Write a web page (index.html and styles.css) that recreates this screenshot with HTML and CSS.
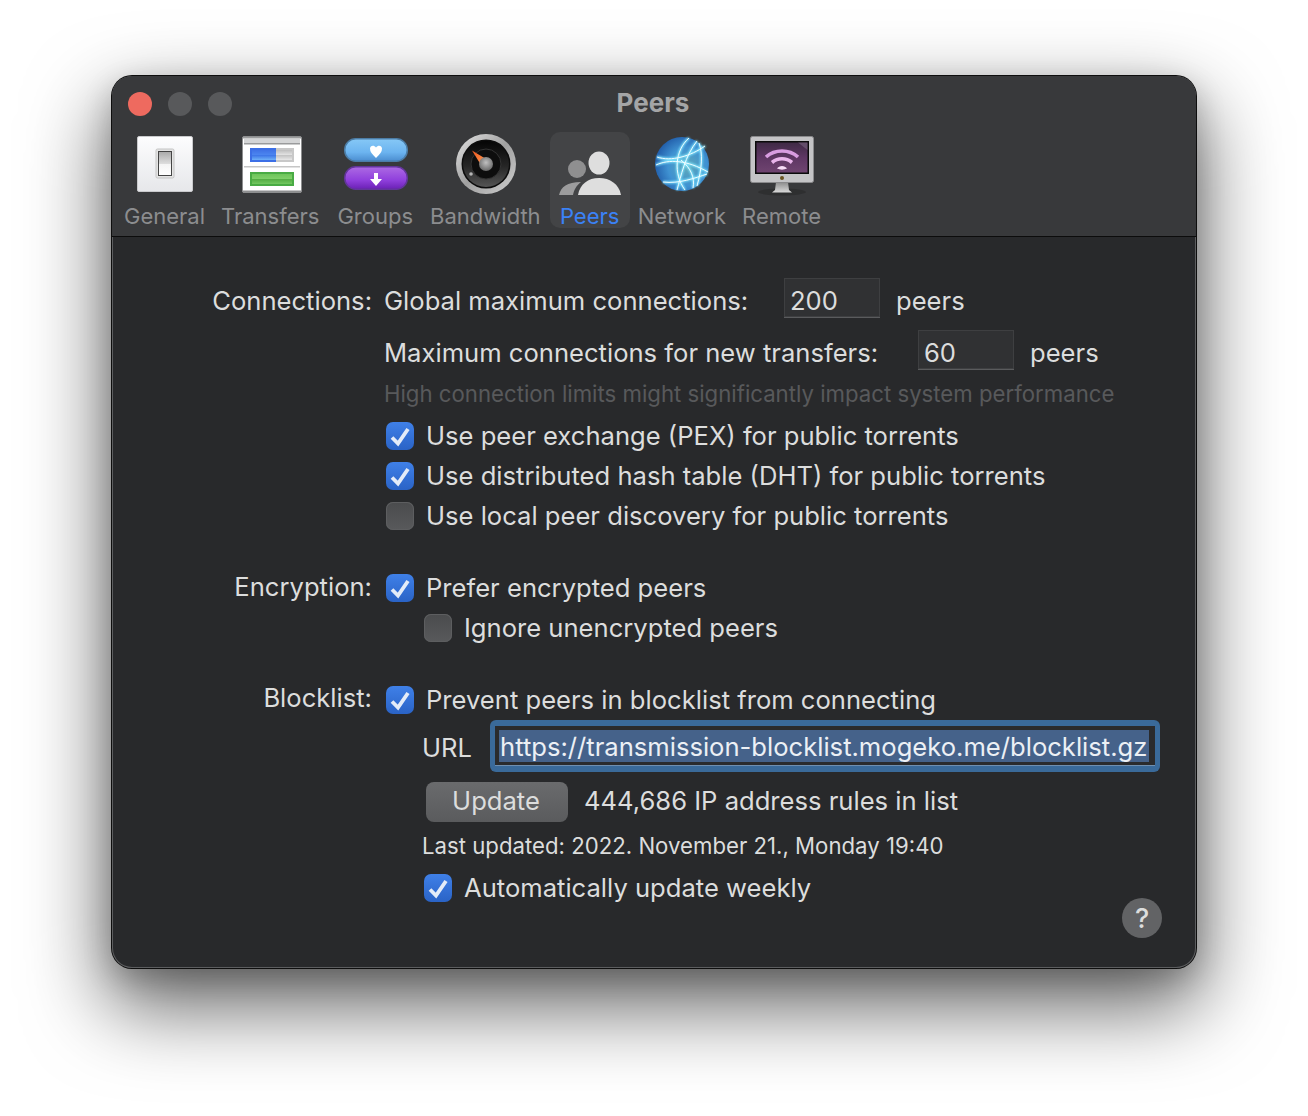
FILE: index.html
```html
<!DOCTYPE html>
<html lang="en">
<head>
    <meta charset="UTF-8">
    <meta name="viewport" content="width=device-width, initial-scale=1.0">
    <title>Peers</title>
    <link rel="stylesheet" href="styles.css">
</head>
<body>
    <div class="window">
        <div class="header">
            <div class="titlebar">
                <div class="lights">
                    <span class="light close"></span>
                    <span class="light"></span>
                    <span class="light"></span>
                </div>
                <div class="title">Peers</div>
            </div>
            <div class="toolbar">
                <div class="tool tool-general">
                    <svg class="tool-icon" width="56" height="64" viewBox="0 0 56 64">
                        <defs>
                            <linearGradient id="plate" x1="0" y1="0" x2="0" y2="1"><stop offset="0" stop-color="#fdfdfe"/><stop offset="1" stop-color="#e6e7ea"/></linearGradient>
                            <linearGradient id="rocker" x1="0" y1="0" x2="0" y2="1"><stop offset="0" stop-color="#a9a9a9"/><stop offset=".5" stop-color="#dcdcdc"/><stop offset=".52" stop-color="#f4f4f4"/><stop offset="1" stop-color="#fff"/></linearGradient>
                        </defs>
                        <rect x=".5" y="4.5" width="55" height="55" rx="1.5" fill="url(#plate)" stroke="#c9cacc"/>
                        <rect x="19" y="17" width="18" height="29" rx="1.5" fill="#e4e4e4" stroke="#c4c4c4"/>
                        <rect x="21.5" y="19.5" width="13" height="24" fill="url(#rocker)" stroke="#444" stroke-width="1"/>
                    </svg>
                    <span class="tool-label">General</span>
                </div>
                <div class="tool tool-transfers">
                    <svg class="tool-icon" width="60" height="64" viewBox="0 0 60 64">
                        <defs>
                            <linearGradient id="blue-bar" x1="0" y1="0" x2="0" y2="1"><stop offset="0" stop-color="#3f72e6"/><stop offset=".5" stop-color="#4c86f0"/><stop offset=".55" stop-color="#3f78e8"/><stop offset="1" stop-color="#6eb0f8"/></linearGradient>
                            <linearGradient id="gray-bar" x1="0" y1="0" x2="0" y2="1"><stop offset="0" stop-color="#bdbdbd"/><stop offset=".5" stop-color="#e4e4e4"/><stop offset=".55" stop-color="#c4c4c4"/><stop offset="1" stop-color="#e8e8e8"/></linearGradient>
                            <linearGradient id="green-bar" x1="0" y1="0" x2="0" y2="1"><stop offset="0" stop-color="#6ec45a"/><stop offset=".5" stop-color="#7fd06a"/><stop offset=".55" stop-color="#55ad45"/><stop offset="1" stop-color="#72c860"/></linearGradient>
                        </defs>
                        <rect x=".5" y="4.5" width="59" height="56" rx="1.5" fill="#fff" stroke="#8d8e8f"/>
                        <rect x="1" y="5" width="58" height="1.5" fill="#9a9b9c"/>
                        <rect x="2" y="7" width="56" height="4" fill="#d4d5d6"/>
                        <rect x="2" y="11" width="56" height="1.5" fill="#9a9b9c"/>
                        <rect x="2" y="34" width="56" height="1.5" fill="#c6c6c6"/>
                        <rect x="1" y="58.5" width="58" height="2" fill="#8d8e8f"/>
                        <rect x="8" y="16" width="44" height="14" fill="#c8c8c8"/>
                        <rect x="10" y="18" width="40" height="10" fill="url(#gray-bar)"/>
                        <rect x="8" y="16" width="26" height="14" fill="#3c6fe6"/>
                        <rect x="10" y="18" width="24" height="10" fill="url(#blue-bar)"/>
                        <rect x="8" y="40" width="44" height="14" fill="#49ab44"/>
                        <rect x="10" y="42" width="40" height="10" fill="url(#green-bar)"/>
                    </svg>
                    <span class="tool-label">Transfers</span>
                </div>
                <div class="tool tool-groups">
                    <svg class="tool-icon" width="64" height="64" viewBox="0 0 64 64">
                        <defs>
                            <linearGradient id="pill-blue" x1="0" y1="0" x2="0" y2="1"><stop offset="0" stop-color="#86c8f6"/><stop offset=".6" stop-color="#6cb4f0"/><stop offset="1" stop-color="#4a8ccf"/></linearGradient>
                            <linearGradient id="pill-purple" x1="0" y1="0" x2="0" y2="1"><stop offset="0" stop-color="#ad6ae4"/><stop offset=".6" stop-color="#8f3fdc"/><stop offset="1" stop-color="#6a20b4"/></linearGradient>
                        </defs>
                        <rect x=".75" y="6.750" width="62.500" height="22.500" rx="11" fill="url(#pill-blue)" stroke="#4c7da6" stroke-width="1.500"/>
                        <rect x=".75" y="34.750" width="62.500" height="22.500" rx="11" fill="url(#pill-purple)" stroke="#62359a" stroke-width="1.500"/>
                        <path d="M32 26 C28 22 26 20 26 16.500 C26 13.500 30 12.500 32 15.500 C34 12.500 38 13.500 38 16.500 C38 20 36 22 32 26Z" fill="#fff"/>
                        <path d="M30 41 h4 v6 h4 l-6 7 l-6 -7 h4Z" fill="#fff"/>
                    </svg>
                    <span class="tool-label">Groups</span>
                </div>
                <div class="tool tool-bandwidth">
                    <svg class="tool-icon" width="60" height="64" viewBox="0 0 60 64">
                        <defs>
                            <linearGradient id="dial-ring" x1="0" y1="0" x2="1" y2="1"><stop offset="0" stop-color="#e4e4e4"/><stop offset=".5" stop-color="#a0a0a0"/><stop offset="1" stop-color="#d0d0d0"/></linearGradient>
                            <radialGradient id="dial-hub" cx=".5" cy=".4" r=".65"><stop offset="0" stop-color="#c0c0c0"/><stop offset="1" stop-color="#606060"/></radialGradient>
                            <linearGradient id="dial-face" x1="0" y1="0" x2="0" y2="1"><stop offset="0" stop-color="#050505"/><stop offset=".55" stop-color="#262626"/><stop offset="1" stop-color="#555"/></linearGradient>
                            <linearGradient id="dial-needle" x1="0" y1="0" x2="1" y2="1"><stop offset="0" stop-color="#f4541a"/><stop offset="1" stop-color="#f7a05a"/></linearGradient>
                        </defs>
                        <circle cx="30" cy="32" r="30" fill="url(#dial-ring)"/>
                        <circle cx="30" cy="32" r="24.500" fill="#0c0c0c"/>
                        <circle cx="30" cy="32" r="23" fill="url(#dial-face)"/>
                        <circle cx="30" cy="32" r="15" fill="#0d0d0d" stroke="#333" stroke-width="1"/>
                        <circle cx="15" cy="42" r="1.800" fill="#b5b5b5"/>
                        <path d="M16 18.500 L30 27 L25 33Z" fill="url(#dial-needle)"/>
                        <circle cx="30" cy="32" r="7" fill="url(#dial-hub)"/>
                    </svg>
                    <span class="tool-label">Bandwidth</span>
                </div>
                <div class="tool tool-peers">
                    <svg class="tool-icon" width="62" height="64" viewBox="0 0 62 64">
                        <circle cx="18" cy="37" r="9" fill="#8f8f90"/>
                        <path d="M0 63 C2 55 8 50 22 50 C17 54 15 58 14 63Z" fill="#9c9c9d"/>
                        <ellipse cx="40" cy="31" rx="10.500" ry="11.500" fill="#dedede"/>
                        <path d="M19 63 C21 52 29 46 40 46 C51 46 60 52 62 63Z" fill="#dedede"/>
                    </svg>
                    <span class="tool-label active-label">Peers</span>
                </div>
                <div class="tool tool-network">
                    <svg class="tool-icon" width="54" height="64" viewBox="0 0 54 64">
                        <defs>
                            <radialGradient id="globe" cx=".6" cy=".55" r=".65"><stop offset="0" stop-color="#5fa8b8"/><stop offset=".55" stop-color="#3f92d2"/><stop offset="1" stop-color="#1d56a4"/></radialGradient>
                            <filter id="glow" x="-10%" y="-10%" width="120%" height="120%"><feGaussianBlur stdDeviation="1"/></filter>
                        </defs>
                        <circle cx="27" cy="32" r="27" fill="url(#globe)"/>
                        <g fill="none" stroke="#7fe6ff" stroke-width="2.400" filter="url(#glow)">
                            <path d="M2 25 C16 30 36 24 50 14"/>
                            <path d="M1 33 C14 27 32 28 53 40"/>
                            <path d="M34 6 C20 18 18 42 30 58"/>
                            <path d="M42 9 C30 24 26 44 22 58"/>
                            <path d="M26 28 C36 36 40 46 38 56"/>
                            <path d="M8 50 C24 52 40 46 52 42"/>
                            <path d="M44 11 C48 22 47 36 42 54"/>
                        </g>
                        <g fill="none" stroke="#f0fcff" stroke-width="1">
                            <path d="M2 25 C16 30 36 24 50 14"/>
                            <path d="M1 33 C14 27 32 28 53 40"/>
                            <path d="M34 6 C20 18 18 42 30 58"/>
                            <path d="M42 9 C30 24 26 44 22 58"/>
                            <path d="M26 28 C36 36 40 46 38 56"/>
                            <path d="M8 50 C24 52 40 46 52 42"/>
                            <path d="M44 11 C48 22 47 36 42 54"/>
                        </g>
                    </svg>
                    <span class="tool-label">Network</span>
                </div>
                <div class="tool tool-remote">
                    <svg class="tool-icon" width="64" height="64" viewBox="0 0 64 64">
                        <defs>
                            <linearGradient id="screen" x1="0" y1="0" x2="0" y2="1"><stop offset="0" stop-color="#3f2a45"/><stop offset=".5" stop-color="#5e3663"/><stop offset="1" stop-color="#6f4470"/></linearGradient>
                            <linearGradient id="stand" x1="0" y1="0" x2="0" y2="1"><stop offset="0" stop-color="#8a8a8a"/><stop offset="1" stop-color="#dadada"/></linearGradient>
                        </defs>
                        <ellipse cx="32" cy="60" rx="24" ry="3.500" fill="#2b2b2c" opacity=".7"/>
                        <path d="M26 50 h12 l1 8 l3 2.500 h-20 l3 -2.500Z" fill="url(#stand)"/>
                        <rect x=".5" y="4.500" width="63" height="46" rx="2" fill="#c4c4c6" stroke="#8a8a8c"/>
                        <rect x="5" y="9" width="54" height="33" fill="#0a0a0a"/>
                        <rect x="6.500" y="10.500" width="51" height="30" fill="url(#screen)"/>
                        <path d="M48 10.500 L57.500 10.500 L57.500 18Z" fill="#7a6480" opacity=".6"/>
                        <g fill="none">
                            <path d="M16 25 C25 17 39 17 48 25" stroke="#d89ce0" stroke-width="3.600"/>
                            <path d="M22 30.500 C28 25.500 36 25.500 42 30.500" stroke="#e8b4ea" stroke-width="3.600"/>
                        </g>
                        <path d="M27 36.500 C29 33 35 33 37 36.500 C34 38 30 38 27 36.500Z" fill="#f6dcf6"/>
                        <circle cx="32" cy="46" r="2" fill="#6a5320"/>
                    </svg>
                    <span class="tool-label">Remote</span>
                </div>
            </div>
        </div>

        <div class="content">
            <div class="section">
                <div class="section-label label-tall">Connections:</div>
                <div class="section-body">
                    <div class="row">
                        <span class="field-label label-global">Global maximum connections:</span>
                        <span class="num-input">200</span>
                        <span class="field-label">peers</span>
                    </div>
                    <div class="row row-second">
                        <span class="field-label label-new">Maximum connections for new transfers:</span>
                        <span class="num-input">60</span>
                        <span class="field-label">peers</span>
                    </div>
                    <div class="hint">High connection limits might significantly impact system performance</div>
                    <label class="check check-first"><span class="box on"><svg class="tick" viewBox="0 0 28 28"><path d="M6 15.500 L12 21.500 L22 7"/></svg></span>Use peer exchange (PEX) for public torrents</label>
                    <label class="check"><span class="box on"><svg class="tick" viewBox="0 0 28 28"><path d="M6 15.500 L12 21.500 L22 7"/></svg></span>Use distributed hash table (DHT) for public torrents</label>
                    <label class="check"><span class="box"></span>Use local peer discovery for public torrents</label>
                </div>
            </div>

            <div class="section section-gap">
                <div class="section-label">Encryption:</div>
                <div class="section-body">
                    <label class="check"><span class="box on"><svg class="tick" viewBox="0 0 28 28"><path d="M6 15.500 L12 21.500 L22 7"/></svg></span>Prefer encrypted peers</label>
                    <label class="check check-sub"><span class="box"></span>Ignore unencrypted peers</label>
                </div>
            </div>

            <div class="section section-gap">
                <div class="section-label label-block">Blocklist:</div>
                <div class="section-body">
                    <label class="check"><span class="box on"><svg class="tick" viewBox="0 0 28 28"><path d="M6 15.500 L12 21.500 L22 7"/></svg></span>Prevent peers in blocklist from connecting</label>
                    <div class="url-row">
                        <span class="url-label">URL</span>
                        <div class="url-input"><div class="url-field"><span class="url-text">https://transmission-blocklist.mogeko.me/blocklist.gz</span></div></div>
                    </div>
                    <div class="update-row">
                        <button class="update-btn">Update</button>
                        <span class="rule-count">444,686 IP address rules in list</span>
                    </div>
                    <div class="last-updated">Last updated: 2022. November 21., Monday 19:40</div>
                    <label class="check check-auto"><span class="box on"><svg class="tick" viewBox="0 0 28 28"><path d="M6 15.500 L12 21.500 L22 7"/></svg></span>Automatically update weekly</label>
                </div>
            </div>

            <button class="help">?</button>
        </div>
    </div>
</body>
</html>
```

FILE: styles.css
```css
* { box-sizing: border-box; margin: 0; padding: 0; }
html, body { height: 100%; overflow: hidden; }
body { background: #fff; padding: 76px 112px 0; font-family: Inter, "Noto Sans", sans-serif; font-size: 25.6px; color: #dcdddd; }

.window { position: relative; width: 1084px; height: 892px; border-radius: 20px; background: #28292b; box-shadow: inset 0 0 0 1px #5c5d5f, 0 0 0 1px #0e0e0e, 0 10px 30px rgba(0, 0, 0, 0.2), 0 34px 80px 6px rgba(0, 0, 0, 0.6); overflow: hidden; }

.header { height: 161px; background: #38393b; border-bottom: 1px solid #0c0c0c; }
.titlebar { display: flex; align-items: center; height: 56px; padding: 0 16px; }
.lights { display: flex; gap: 16px; }
.light { width: 24px; height: 24px; border-radius: 50%; background: #58595b; }
.close { background: #ee6a5f; }
.title { flex: 1; margin-left: -106px; margin-top: -4px; text-align: center; font-size: 26px; font-weight: 700; color: #a4a5a6; }

.toolbar { display: flex; padding: 0 4px; }
.tool { display: flex; flex-direction: column; align-items: center; height: 96px; padding: 0 8px; }
.tool-icon { display: block; flex: none; }
.tool-label { font-size: 22px; line-height: 28px; margin-top: 6px; color: #8c8d8f; white-space: nowrap; }
.tool-transfers .tool-icon { margin-left: 4px; }
.tool-groups { margin-left: 2px; }
.tool-groups .tool-icon { margin-left: 2px; }
.tool-bandwidth { margin-left: 1px; }
.tool-bandwidth .tool-icon { margin-left: 2px; }
.tool-peers { width: 80px; margin-left: 1px; padding: 0; background: #434446; border-radius: 10px; }
.active-label { color: #3b82f6; }

.content { padding-top: 41px; }
.section { display: flex; gap: 12px; }
.section-gap { margin-top: 44px; }
.section-label { width: 260px; text-align: right; line-height: 26px; flex: none; }
.label-tall { line-height: 46px; }
.label-block { line-height: 24px; }
.section-body { flex: 1; }

.row { display: flex; align-items: flex-start; height: 40px; }
.row-second { margin-top: 12px; }
.field-label { line-height: 46px; white-space: nowrap; }
.label-global { width: 400px; }
.label-new { width: 534px; }
.num-input { width: 96px; height: 40px; margin-right: 16px; padding-left: 6px; line-height: 46px; background: #303133; border-bottom: 1px solid #5a5b5d; box-shadow: inset 0 0 0 1px #3e3f41; }

.hint { margin-top: 10px; height: 28px; line-height: 28px; font-size: 22.2px; color: #58595b; white-space: nowrap; }

.check { display: flex; align-items: flex-start; gap: 12px; height: 28px; margin-top: 12px; margin-left: 2px; line-height: 28px; white-space: nowrap; }
.section-body > .check:first-child { margin-top: 0; }
.check-first { margin-top: 14px; }
.check-sub { margin-left: 40px; }
.box { width: 28px; height: 28px; flex: none; border-radius: 7px; background: linear-gradient(#4a4b4d, #58595b); box-shadow: inset 0 0 0 1px #5d5e60; }
.box.on { background: linear-gradient(#3f80e8, #2a63c6); box-shadow: none; }
.tick { display: block; width: 28px; height: 28px; fill: none; stroke: #e4ecf8; stroke-width: 3.8; }

.url-row { display: flex; align-items: center; height: 52px; margin-top: 6px; }
.url-label { width: 106px; padding-left: 38px; padding-top: 2px; }
.url-input { flex: none; width: 670px; height: 52px; padding: 6px 5px 6px; border-radius: 6px; background: #3a6a9a; }
.url-field { height: 40px; padding: 4px 4px; background: #2a2b2d; border-bottom: 1px solid #6f8fb0; }
.url-text { display: block; width: fit-content; height: 32px; padding: 0 2px 0 1px; line-height: 33px; color: #ecf0f5; background: #45628a; white-space: nowrap; }

.update-row { display: flex; align-items: center; gap: 16px; height: 40px; margin-top: 10px; margin-left: 42px; }
.update-btn { width: 142px; height: 40px; padding: 0 2px 3px 0; border: none; border-radius: 8px; background: linear-gradient(#6a6b6d, #5a5b5d); color: #dcdddd; font: inherit; }
.rule-count { padding-bottom: 4px; }
.last-updated { height: 28px; margin-top: 10px; margin-left: 38px; line-height: 28px; font-size: 22.2px; white-space: nowrap; }
.check-auto { margin-top: 14px; margin-left: 40px; }

.help { position: absolute; right: 34px; bottom: 30px; width: 40px; height: 40px; border: none; border-radius: 50%; background: #626365; color: #dcdddd; font: 500 27px Inter, sans-serif; }
```
